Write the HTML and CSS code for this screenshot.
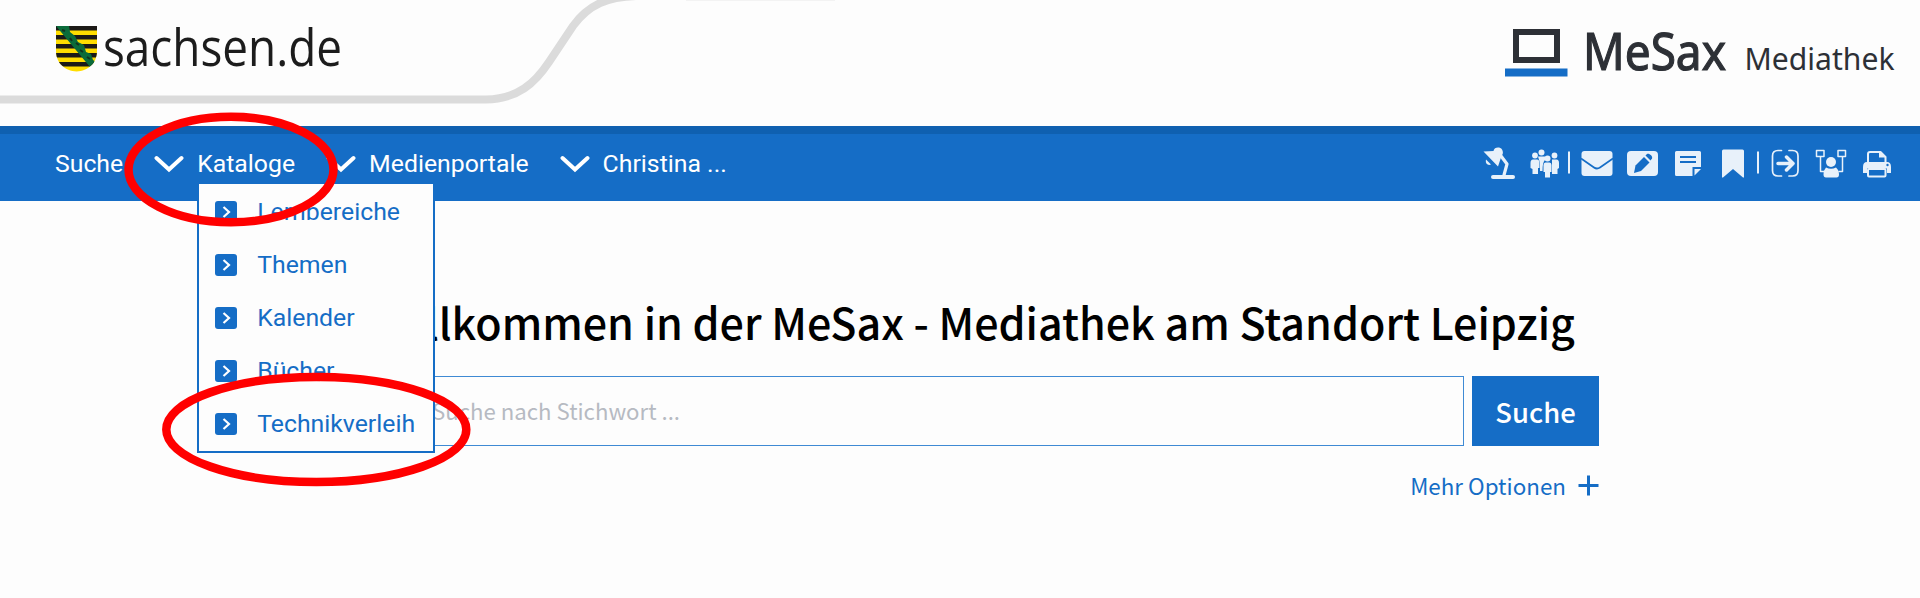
FILE: index.html
```html
<!DOCTYPE html>
<html lang="de">
<head>
  <meta charset="utf-8">
  <title>MeSax Mediathek</title>
  <link rel="stylesheet" href="styles.css">
</head>
<body>

  <header class="header">
    <svg class="swoosh" width="900" height="126" viewBox="0 0 900 126">
      <path d="M0 99.5H486C518 99 535 83 549 62L573 26C589 4 608 -3 636 -4" fill="none" stroke="#dbdbdb" stroke-width="8"/>
      <path d="M686 0.5H835" stroke="#f3f3f3"/>
    </svg>
    <svg class="logo-sachsen" width="300" height="90" viewBox="56 4 300 90">
      <clipPath id="shield"><path d="M56 26H97V51C97 63 88 71 76.500 71.500C65 71 56 63 56 51Z"/></clipPath>
      <g clip-path="url(#shield)">
        <rect x="56" y="26" width="41" height="46" fill="#fd0"/>
        <path d="M56 28.300H97M56 37.300H97M56 46.300H97M56 55.300H97M56 64.300H97" stroke="#1c1a17" stroke-width="4.500"/>
        <path d="M56 26H69L70 32L75 36L78 42L84 45L86 52L91 54L93 60L96 62L90 67Z" fill="#0b6b3a"/>
        <path d="M62 30l3 1M70 38l2 3M76 43l3 2M80 50l3 2M87 57l3 2" stroke="#12331f" stroke-width="2"/>
      </g>
      <text class="logo-text" x="103" y="66" font-size="51" textLength="239" lengthAdjust="spacingAndGlyphs">sachsen.de</text>
    </svg>
    <svg class="logo-mesax" width="395" height="90" viewBox="1505 4 395 90">
      <rect x="1516" y="32" width="41" height="28" fill="none" stroke="#2d3036" stroke-width="6"/>
      <rect x="1505" y="68.500" width="62.500" height="8" fill="#156dc6"/>
      <text class="brand" x="1583" y="70" font-size="51" textLength="143" lengthAdjust="spacingAndGlyphs">MeSax</text>
      <text class="brand-sub" x="1744.500" y="70" font-size="30.500" textLength="150" lengthAdjust="spacingAndGlyphs">Mediathek</text>
    </svg>
  </header>

  <nav class="navbar">
    <ul class="nav">
      <li class="nav-item">Suche</li>
      <li class="nav-item">
        <svg class="chevron" width="30" height="18" viewBox="0 0 30 18"><path d="M2.500 3L15 14.500L27.500 3"/></svg>
        <span>Kataloge</span>
        <ul class="dropdown">
          <li><svg width="22" height="22" viewBox="0 0 22 22"><rect width="22" height="22" rx="3"/><path d="M8.500 6L14 11L8.500 16"/></svg>Lernbereiche</li>
          <li><svg width="22" height="22" viewBox="0 0 22 22"><rect width="22" height="22" rx="3"/><path d="M8.500 6L14 11L8.500 16"/></svg>Themen</li>
          <li><svg width="22" height="22" viewBox="0 0 22 22"><rect width="22" height="22" rx="3"/><path d="M8.500 6L14 11L8.500 16"/></svg>Kalender</li>
          <li><svg width="22" height="22" viewBox="0 0 22 22"><rect width="22" height="22" rx="3"/><path d="M8.500 6L14 11L8.500 16"/></svg>Bücher</li>
          <li><svg width="22" height="22" viewBox="0 0 22 22"><rect width="22" height="22" rx="3"/><path d="M8.500 6L14 11L8.500 16"/></svg>Technikverleih</li>
        </ul>
      </li>
      <li class="nav-item">
        <svg class="chevron" width="30" height="18" viewBox="0 0 30 18"><path d="M2.500 3L15 14.500L27.500 3"/></svg>
        <span>Medienportale</span>
      </li>
      <li class="nav-item">
        <svg class="chevron" width="30" height="18" viewBox="0 0 30 18"><path d="M2.500 3L15 14.500L27.500 3"/></svg>
        <span>Christina ...</span>
      </li>
    </ul>

    <div class="tools">
      <!-- desk lamp -->
      <svg width="32" height="32" viewBox="0 0 32 32">
        <path class="fill" d="M0.500 4.500L10.500 4C11 0 17 -0.500 19 2.500C20.500 5 20 7 18.500 9L15 19.500Z"/>
        <path class="fill" d="M3 12.500L8 17.500C5 19 2 16.500 3 12.500Z"/>
        <path class="line" d="M18 9L24 17L21 28" stroke-width="3.200"/>
        <path class="line" d="M10 30H30" stroke-width="4"/>
      </svg>
      <!-- group -->
      <svg width="30" height="32" viewBox="0 0 30 32">
        <g class="fill">
          <circle cx="11.500" cy="5.500" r="3"/><circle cx="5" cy="8.500" r="2.900"/><circle cx="24.500" cy="8.500" r="2.900"/>
          <path d="M8 9.500H15V13Q12.500 15 12.500 24H10V16Z"/>
          <path d="M3 12.500H7Q9.500 12.500 9.500 16V21H8V27H2.500V22L0.500 21V16Q.5 12.500 3 12.500Z"/>
          <path d="M22 12.500H26.500Q29 12.500 29 16V21L27.500 22V27H22V21Z"/>
          <circle cx="17.500" cy="11.500" r="3"/>
          <path d="M15.500 15.500H19.500Q21.500 15.500 21.500 18V25H20V30.500H15V25H13.500V18Q13.500 15.500 15.500 15.500Z"/>
        </g>
      </svg>
      <svg width="2" height="32" viewBox="0 0 2 32"><path class="fill" d="M0 4.500H2V26.500H0Z"/></svg>
      <!-- mail -->
      <svg width="32" height="32" viewBox="0 0 32 32">
        <rect class="fill" x="0.500" y="4" width="31" height="25" rx="3"/>
        <path class="cut" d="M0 11.500L13 20.500Q16 22.500 19 20.500L32 11.500" stroke-width="1.800"/>
      </svg>
      <!-- edit -->
      <svg width="31" height="32" viewBox="0 0 31 32">
        <rect class="fill" x="0" y="4" width="31" height="25" rx="4"/>
        <path class="cutfill" d="M7 26L8.500 18.500L17 10L22.500 15.500L14 24Z"/>
        <path class="cutfill" d="M18.500 8.500L20 7C22 6 26 9 25 11.500L23.500 13.500Z"/>
      </svg>
      <!-- note -->
      <svg width="27" height="32" viewBox="0 0 27 32">
        <path class="fill" d="M1.500 4H24.500Q26 4 26 5.500V20H17.500V29H1.500Q0 29 0 27.500V5.500Q0 4 1.500 4Z"/>
        <path class="fill" d="M19.500 22H26L19.500 28.500Z"/>
        <path class="cut" d="M5 10H21M5 15H21" stroke-width="2"/>
      </svg>
      <svg width="22" height="32" viewBox="0 0 22 32"><path class="fill" d="M1.500 2.500H20.500Q22 2.500 22 4V30.500H21L11 22L1 30.500H0V4Q0 2.500 1.500 2.500Z"/></svg>
      <svg width="2" height="32" viewBox="0 0 2 32"><path class="fill" d="M0 4.500H2V26.500H0Z"/></svg>
      <!-- logout -->
      <svg width="29" height="32" viewBox="0 0 29 32">
        <path class="line" d="M10.500 3.500H7Q1.500 3.500 1.500 9V23.500Q1.500 29 7 29H10.500M18 3.500H21.500Q27 3.500 27 9V23.500Q27 29 21.500 29H18" stroke-width="1.700"/>
        <path class="line" d="M7 16.500H22M15.500 10L22 16.500L15.500 23" stroke-width="3.500"/>
      </svg>
      <!-- user network -->
      <svg width="32" height="32" viewBox="0 0 32 32">
        <path class="line" d="M1.500 3.500H9V9.500H1.500ZM23 3.500H30.500V9.500H23ZM5.500 10V24.500H9M27.500 10V24.500H24" stroke-width="1.500"/>
        <circle class="fill" cx="16" cy="15" r="5"/>
        <path class="fill" d="M11 20.500Q16 23 21 20.500Q24 23 24 27.500Q24 30.500 21.500 30.500H11Q8.500 30.500 8.500 27.500Q8.500 23 11 20.500Z"/>
      </svg>
      <!-- print -->
      <svg width="30" height="32" viewBox="0 0 30 32">
        <path class="line" d="M6 16V7Q6 5 8 5H18.500L23.500 10V16" stroke-width="2"/>
        <path class="fill" d="M17 4.500L24 10.500H17ZM5 15H25Q29 15 29 20V26H25V21.500H5V26H1V20Q1 15 5 15Z"/>
        <rect class="line" x="6" y="22" width="17.500" height="7.500" rx="1" stroke-width="2"/>
        <circle class="cutfill" cx="25.500" cy="18" r="1.200"/>
      </svg>
    </div>
  </nav>

  <main class="main">
    <h1 class="title">Willkommen in der MeSax - Mediathek am Standort Leipzig</h1>
    <form class="search">
      <input class="search-field" type="text" placeholder="Suche nach Stichwort ...">
      <button class="search-button" type="button">Suche</button>
    </form>
    <div class="more">
      <span>Mehr Optionen</span>
      <svg width="21" height="21" viewBox="0 0 21 21"><path d="M10.500 0.500V20.500M0.500 10.500H20.500"/></svg>
    </div>
  </main>

  <!-- markers -->
  <svg class="marker" width="500" height="500" viewBox="0 0 500 500">
    <ellipse cx="231" cy="169.500" rx="102.500" ry="52.800"/>
    <ellipse cx="316.300" cy="429.500" rx="150" ry="52.500"/>
  </svg>

</body>
</html>
```
FILE: styles.css
```css
body {
    margin: 0;
    background: #fdfdfd;
    font-family: Roboto, Arial, sans-serif;
    overflow: hidden;
}
ul {
    list-style: none;
    margin: 0;
    padding: 0;
}

/* header */
.header {
    position: relative;
    display: flex;
    justify-content: space-between;
    box-sizing: border-box;
    height: 126px;
    padding: 4px 20px 0 56px;
}
.swoosh {
    position: absolute;
    left: 0;
    top: 0;
}
.logo-sachsen {
    position: relative;
}
.logo-text {
    font-family: "Open Sans", sans-serif;
    fill: #1c1c1c;
}
.brand, .brand-sub {
    font-family: "Noto Sans", sans-serif;
    fill: #2d3036;
}
.brand {
    stroke: #2d3036;
    stroke-width: 1.2;
}

/* navigation */
.navbar {
    display: flex;
    justify-content: space-between;
    align-items: flex-start;
    box-sizing: border-box;
    height: 75px;
    padding: 0 28px 0 55px;
    background: #156dc6;
    border-top: 8px solid #0f60b0;
    color: #fff;
}
.nav {
    display: flex;
    gap: 31px;
    padding-top: 14px;
}
.nav-item {
    position: relative;
    display: flex;
    align-items: center;
    gap: 13px;
    font-size: 24.8px;
    line-height: 32px;
    white-space: nowrap;
}
.chevron path {
    fill: none;
    stroke: #fff;
    stroke-width: 4;
    stroke-linecap: round;
}
.dropdown {
    position: absolute;
    left: 43px;
    top: 36px;
    z-index: 2;
    box-sizing: border-box;
    width: 238px;
    height: 269px;
    padding-top: 1px;
    background: #fdfdfd;
    border: 2px solid #156dc6;
    border-top: 0;
    color: #156dc6;
}
.dropdown li {
    display: flex;
    align-items: center;
    gap: 20px;
    height: 53px;
    padding-left: 16px;
}
.dropdown rect {
    fill: #156dc6;
}
.dropdown path {
    fill: none;
    stroke: #fff;
    stroke-width: 2.2;
}

/* icons on the right */
.tools {
    display: grid;
    grid-template-columns: 47px 38px 13px 46px 48px 47px 35px 14px 44px 47px 30px;
    padding-top: 13px;
}
.fill {
    fill: #e8f1fa;
}
.line {
    fill: none;
    stroke: #e8f1fa;
    stroke-linecap: round;
    stroke-linejoin: round;
}
.cut {
    fill: none;
    stroke: #156dc6;
}
.cutfill {
    fill: #156dc6;
}

/* search */
.main {
    width: 1279px;
    margin-left: 320px;
    padding-top: 90px;
    font-family: "Noto Sans CJK SC", sans-serif;
}
.title {
    margin: 0;
    padding-left: 31px;
    font-size: 43px;
    font-weight: 500;
    line-height: 60px;
    text-align: center;
    white-space: nowrap;
    color: #000;
}
.search {
    display: flex;
    gap: 8px;
    height: 70px;
    margin-top: 25px;
}
.search-field {
    flex: 1;
    box-sizing: border-box;
    padding: 0 20px 2px 111px;
    border: 1.5px solid #3f8ad4;
    background: #fdfdfd;
    font-family: inherit;
    font-size: 22.2px;
}
.search-field::placeholder {
    color: #b6bac2;
}
.search-button {
    width: 127px;
    padding: 0;
    border: 0;
    background: #156dc6;
    color: #fff;
    font-family: inherit;
    font-size: 27.4px;
    font-weight: 500;
}
.more {
    display: flex;
    justify-content: flex-end;
    align-items: center;
    gap: 12px;
    margin-top: 21px;
    font-size: 22.4px;
    line-height: 36px;
    color: #156dc6;
}
.more path {
    stroke: #156dc6;
    stroke-width: 3;
}

.marker {
    position: absolute;
    left: 0;
    top: 0;
    z-index: 3;
    fill: none;
    stroke: #f00;
    stroke-width: 8.5;
    pointer-events: none;
}
```
